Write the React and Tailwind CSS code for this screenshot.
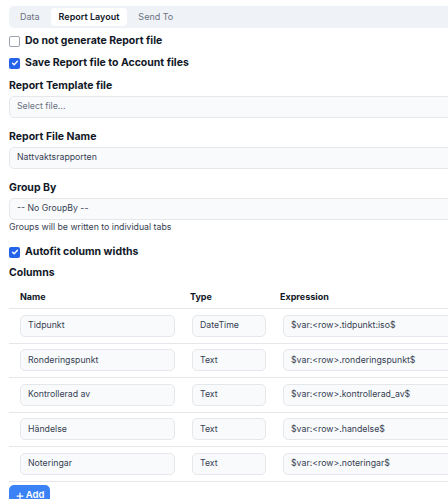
import { Plus } from 'lucide-react';

const rows = [
  { name: 'Tidpunkt', type: 'DateTime', expr: '$var:<row>.tidpunkt:iso$' },
  { name: 'Ronderingspunkt', type: 'Text', expr: '$var:<row>.ronderingspunkt$' },
  { name: 'Kontrollerad av', type: 'Text', expr: '$var:<row>.kontrollerad_av$' },
  { name: 'Händelse', type: 'Text', expr: '$var:<row>.handelse$' },
  { name: 'Noteringar', type: 'Text', expr: '$var:<row>.noteringar$' },
];

// Checkbox with label
function Check({ checked, label }) {
  return (
    <div className="flex items-center h-[22px] gap-[5px]">
      {checked ? (
        <span className="w-[11px] h-[11px] rounded-[2px] bg-[#2563eb] flex items-center justify-center">
          <svg width="8" height="8" viewBox="0 0 10 10" fill="none">
            <path d="M2 5.2l2 2 4-4.4" stroke="white" strokeWidth="1.8" strokeLinecap="round" strokeLinejoin="round" />
          </svg>
        </span>
      ) : (
        <span className="w-[11px] h-[11px] rounded-[2px] border border-[#9ca3af] bg-white" />
      )}
      <span className="text-[10.5px] font-bold text-[#111827]">{label}</span>
    </div>
  );
}

function Field({ value, muted }) {
  return (
    <div className={`h-[22px] rounded-[5px] border border-[#e5e7eb] bg-[#f8fafc] flex items-center px-[7px] text-[8.75px] ${muted ? 'text-[#6b7280]' : 'text-[#374151]'}`}>
      {value}
    </div>
  );
}

function Label({ children }) {
  return <div className="text-[10.5px] font-bold text-[#111827] h-[18px] flex items-center">{children}</div>;
}

export default function App() {
  return (
    <div className="w-[448px] h-[499px] overflow-hidden bg-white" style={{ fontFamily: 'Inter, "Noto Sans", sans-serif' }}>
      <div className="w-[640px] pl-[9px] pt-[6px]">
        {/* tabs */}
        <div className="h-[22px] bg-[#eff3f8] rounded-[5px] flex items-center px-[2px] gap-[2px] text-[9px]">
          <div className="px-[9px] text-[#6b7280]">Data</div>
          <div className="h-[18px] px-[8px] bg-white rounded-[4px] flex items-center font-semibold text-[#111827]">Report Layout</div>
          <div className="px-[9px] text-[#6b7280]">Send To</div>
        </div>

        <div className="mt-[2px]">
          <Check label="Do not generate Report file" />
          <Check checked label="Save Report file to Account files" />
        </div>

        <div className="mt-[3px]">
          <Label>Report Template file</Label>
          <div className="mt-[1px]"><Field value="Select file..." muted /></div>
        </div>

        <div className="mt-[10px]">
          <Label>Report File Name</Label>
          <div className="mt-[1px]"><Field value="Nattvaktsrapporten" /></div>
        </div>

        <div className="mt-[10px]">
          <Label>Group By</Label>
          <div className="mt-[1px]"><Field value="-- No GroupBy --" /></div>
          <div className="text-[8.75px] text-[#374151] h-[16px] flex items-center">Groups will be written to individual tabs</div>
        </div>

        <div className="mt-[5px]">
          <Check checked label="Autofit column widths" />
        </div>

        <div className="mt-[1px]">
          <Label>Columns</Label>
        </div>

        {/* columns table */}
        <div className="mt-[4px]">
          <div className="h-[23px] flex items-center border-b border-[#e5e7eb] text-[9px] font-bold text-[#111827]">
            <div className="w-[172px] pl-[11px]">Name</div>
            <div className="w-[90px] pl-[9px]">Type</div>
            <div className="pl-[9px]">Expression</div>
          </div>
          {rows.map((r) => (
            <div key={r.name} className="h-[34.5px] flex items-center border-b border-[#e5e7eb]">
              <div className="w-[177px] pl-[11px] pr-[11px]"><Field value={r.name} /></div>
              <div className="w-[91px] pl-[6px] pr-[11px]"><Field value={r.type} /></div>
              <div className="flex-1 pl-[6px]"><Field value={r.expr} /></div>
            </div>
          ))}
        </div>

        <button className="mt-[3px] h-[22px] w-[41px] rounded-[5px] bg-[#3b82f6] text-white text-[9.5px] font-semibold flex items-center justify-center gap-[1px]">
          <Plus size={10} strokeWidth={3} />
          Add
        </button>
      </div>
    </div>
  );
}
